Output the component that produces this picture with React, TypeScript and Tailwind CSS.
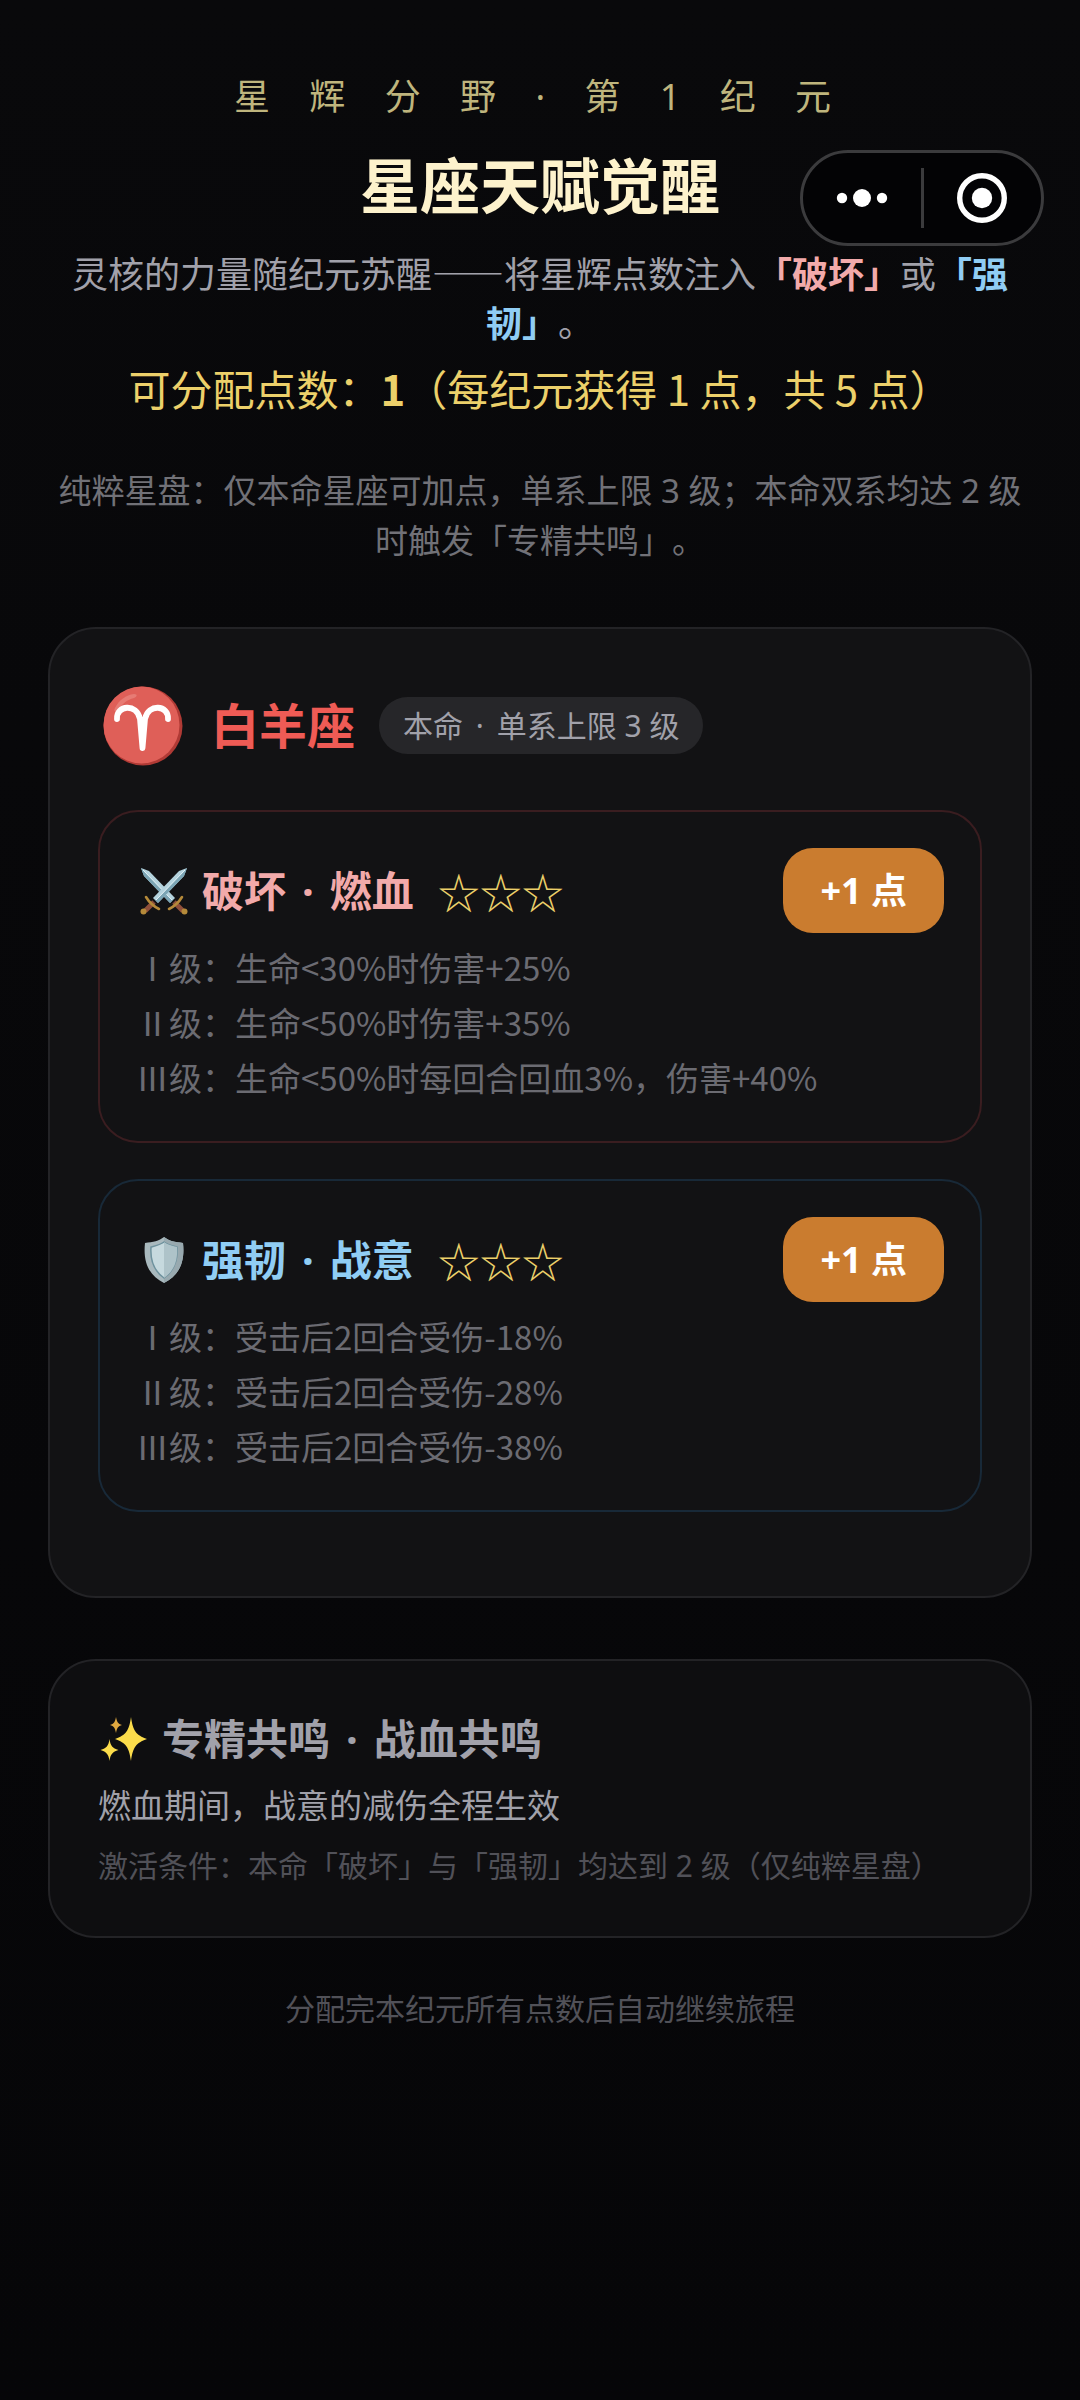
import React from "react";

const FONT = "font-['Noto_Sans','Noto_Sans_CJK_SC',sans-serif]";
const FONT_CJK = "font-['Noto_Sans_CJK_SC',sans-serif]";

interface Talent {
  id: string;
  branch: string;
  name: string;
  icon: React.ReactNode;
  nameColor: string;
  borderColor: string;
  levels: string[];
}

const AriesIcon = () => (
  <svg viewBox="0 0 80 80" className="w-20 h-20 shrink-0" aria-hidden="true">
    <circle cx="40" cy="40" r="39.5" fill="#b03a35" />
    <ellipse cx="38.5" cy="39" rx="38" ry="38.5" fill="#df5f58" />
    <path d="M12 22c4-8 11-13 19-14 4 0 3 3 0 4-7 2-11 5-15 11-3 3-6 3-4-1z" fill="#e98780" opacity=".7" />
    <path
      d="M14 33c-1-14 20-16 23 0l2.500 29 2.500-29c3-16 24-14 23 0"
      fill="none"
      stroke="#fff"
      strokeWidth="5.8"
      strokeLinecap="round"
      strokeLinejoin="round"
    />
  </svg>
);

const SwordsIcon = () => (
  <svg viewBox="0 0 52 52" className="w-13 h-13 shrink-0" aria-hidden="true">
    {[true, false].map((flip) => (
      <g key={String(flip)} transform={flip ? "translate(52 0) scale(-1 1)" : undefined}>
        <path d="M49 3 41 6 15 33l5 5L46 11z" fill="#b4d3de" />
        <path d="M49 3 17.500 35.500 20 38 46 11z" fill="#7ba5b5" />
        <path d="M47 5 18 35" stroke="#e6f4f8" strokeWidth="1" />
        <path d="m16 37-9 9" stroke="#8f4f3a" strokeWidth="5" />
        <path d="M8 32c3 5 7 9 13 12" fill="none" stroke="#b58a3a" strokeWidth="2.600" strokeLinecap="round" />
        <circle cx="5.500" cy="46.500" r="3" fill="#b58a3a" />
      </g>
    ))}
  </svg>
);

const ShieldIcon = () => (
  <svg viewBox="-6 -1 52 52" className="w-13 h-13 shrink-0" aria-hidden="true">
    <path d="M20 2c5 4 11 5 19 6 2 18-3 32-19 40C4 40-1 26 1 8c8-1 14-2 19-6z" fill="#a9b9be" />
    <path d="M20 2c5 4 11 5 19 6 2 18-3 32-19 40z" fill="#98a9af" />
    <path d="M20 7c4 3 9 4 13 5 1 14-3 24-13 31C10 36 6 26 7 12c4-1 9-2 13-5z" fill="#c6d9de" stroke="#6e929e" strokeWidth="1.5" />
    <path d="M20 7c4 3 9 4 13 5 1 14-3 24-13 31z" fill="#aec3c9" />
  </svg>
);

const SparklesIcon = () => (
  <svg viewBox="0 0 52 52" className="w-13 h-13 shrink-0" aria-hidden="true">
    <path d="M33 4c2 14 5 18 16 22-11 4-14 8-16 22-2-14-5-18-16-22 11-4 14-8 16-22z" fill="#fbdc4b" />
    <path d="M11.500 26c1 7 3 9 9 11-6 2-8 4-9 11-1-7-3-9-9-11 6-2 8-4 9-11z" fill="#fbdc4b" />
    <path d="M18 4c1 5 2 7 6 8-4 1-5 3-6 8-1-5-2-7-6-8 4-1 5-3 6-8z" fill="#e0a840" />
  </svg>
);

const Dot = () => <span className="mx-[5px]"> · </span>;

const talents: Talent[] = [
  {
    id: "destroy",
    branch: "破坏",
    name: "燃血",
    icon: <SwordsIcon />,
    nameColor: "text-[#f2aaaa]",
    borderColor: "border-[#3a1d20]",
    levels: ["Ⅰ级：生命<30%时伤害+25%", "Ⅱ级：生命<50%时伤害+35%", "Ⅲ级：生命<50%时每回合回血3%，伤害+40%"],
  },
  {
    id: "tough",
    branch: "强韧",
    name: "战意",
    icon: <ShieldIcon />,
    nameColor: "text-[#90cdf4]",
    borderColor: "border-[#182938]",
    levels: ["Ⅰ级：受击后2回合受伤-18%", "Ⅱ级：受击后2回合受伤-28%", "Ⅲ级：受击后2回合受伤-38%"],
  },
];

const TalentCard = ({ talent }: { talent: Talent }) => (
  <section className={`rounded-[40px] border-2 p-9 ${talent.borderColor}`}>
    <div className="flex items-center justify-between">
      <div className="flex items-center pl-0.5">
        {talent.icon}
        <h3 className={`ml-3 text-[42px] leading-[60px] font-bold ${talent.nameColor}`}>
          {talent.branch}
          <Dot />
          {talent.name}
        </h3>
        <span className={`ml-6 text-[42px] leading-[60px] text-[#ecd06a] ${FONT_CJK}`}>☆☆☆</span>
      </div>
      <button
        type="button"
        className="h-[85px] rounded-[30px] bg-[#ca7c2f] px-[37px] text-[36px] leading-[60px] font-bold text-white"
      >
        +1 点
      </button>
    </div>
    <ul className={`mt-[7px] text-[33px] leading-[55px] text-[#6b6b72] ${FONT_CJK}`}>
      {talent.levels.map((level) => (
        <li key={level}>{level}</li>
      ))}
    </ul>
  </section>
);

// Mini-program capsule in the top right corner
const Capsule = () => (
  <div className="absolute top-[150px] right-9 flex h-24 w-[244px] items-center rounded-full border-3 border-[#3b3b3d] bg-[#030305]">
    <button type="button" aria-label="更多" className="flex h-full flex-1 items-center justify-center">
      <svg viewBox="0 0 52 20" className="w-[52px] h-5">
        <circle cx="6" cy="10" r="5.2" fill="#fff" />
        <circle cx="26" cy="10" r="9" fill="#fff" />
        <circle cx="46" cy="10" r="5.2" fill="#fff" />
      </svg>
    </button>
    <div className="h-15 w-[3px] bg-[#3b3b3d]" />
    <button type="button" aria-label="关闭" className="flex h-full flex-1 items-center justify-center">
      <svg viewBox="0 0 50 50" className="w-[50px] h-[50px]">
        <circle cx="25" cy="25" r="22.3" fill="none" stroke="#fff" strokeWidth="5.4" />
        <circle cx="25" cy="25" r="10.2" fill="#fff" />
      </svg>
    </button>
  </div>
);

export default function App() {
  return (
    <main
      lang="zh-CN"
      className={`relative min-h-screen bg-linear-to-b from-[#09090b] to-[#060608] px-12 pt-[70px] [text-spacing-trim:space-all] ${FONT}`}
    >
      <Capsule />

      <header className="text-center">
        <p className="text-[36px] leading-[54px] tracking-[15px] text-[#bfb57d]">星 辉 分 野 · 第 1 纪 元</p>
        <h1 className="mt-5 text-[60px] leading-[84px] font-bold text-[#fdf2cc]">星座天赋觉醒</h1>
        <p className={`mt-5 px-5 text-[36px] leading-[49px] break-all text-[#a1a1aa] ${FONT_CJK}`}>
          灵核的力量随纪元苏醒——将星辉点数注入<strong className="text-[#f2aaaa]">「破坏」</strong>或
          <strong className="text-[#90cdf4]">「强韧」</strong>。
        </p>
        <p className={`mt-3 text-[42px] leading-[60px] text-[#ecd06a] ${FONT_CJK}`}>
          可分配点数：<b>1</b>（每纪元获得 1 点，共 5 点）
        </p>
        <p className="mt-12 text-[33px] leading-[50px] text-[#717177]">
          纯粹星盘：仅本命星座可加点，单系上限 3 级；本命双系均达 2 级时触发「专精共鸣」。
        </p>
      </header>

      <section className="mt-[61px] rounded-[48px] border-2 border-[#232326] bg-[#121214] p-12 pb-21">
        <div className="flex h-[97px] items-center pl-[5px]">
          <AriesIcon />
          <h2 className="ml-7 text-[48px] leading-[72px] font-bold text-[#ef5b55]">白羊座</h2>
          <span className="ml-6 rounded-full bg-[#262629] px-6 text-[30px] leading-[57px] text-[#a1a1aa]">
            本命
            <Dot />
            单系上限 3 级
          </span>
        </div>
        <div className="mt-9 flex flex-col gap-9">
          {talents.map((talent) => (
            <TalentCard key={talent.id} talent={talent} />
          ))}
        </div>
      </section>

      <section className="mt-[61px] rounded-[48px] border-2 border-[#232326] bg-[#0e0e10] p-12">
        <div className="flex items-center">
          <SparklesIcon />
          <h2 className="ml-3 text-[42px] leading-[60px] font-bold text-[#a1a1aa]">
            专精共鸣
            <Dot />
            战血共鸣
          </h2>
        </div>
        <p className="mt-3 text-[33px] leading-[50px] text-[#a1a1aa]">燃血期间，战意的减伤全程生效</p>
        <p className="mt-3 text-[30px] leading-[45px] text-[#515158]">
          激活条件：本命「破坏」与「强韧」均达到 2 级（仅纯粹星盘）
        </p>
      </section>

      <p className="mt-12 text-center text-[30px] leading-[45px] text-[#515158]">分配完本纪元所有点数后自动继续旅程</p>
    </main>
  );
}
